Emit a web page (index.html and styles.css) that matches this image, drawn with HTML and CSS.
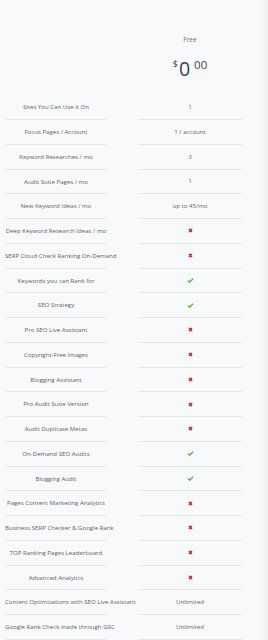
FILE: index.html
```html
<!DOCTYPE html>
<html lang="en">
<head>
<meta charset="utf-8">
<title>Pricing – Free</title>
<link rel="stylesheet" href="styles.css">
</head>
<body>
<div class="table">
  <div class="head-empty"></div>
  <div class="plan-head">
    <div class="plan-name">Free</div>
    <div class="price"><span class="cur">$</span>0<span class="cents">00</span></div>
  </div>

  <div class="cell label">Sites You Can Use It On</div><div class="cell val">1</div>
  <div class="cell label">Focus Pages / Account</div><div class="cell val">1 / account</div>
  <div class="cell label">Keyword Researches / mo</div><div class="cell val">3</div>
  <div class="cell label">Audit Suite Pages / mo</div><div class="cell val">1</div>
  <div class="cell label">New Keyword Ideas / mo</div><div class="cell val">up to 45/mo</div>
  <div class="cell label">Deep Keyword Research Ideas / mo</div><div class="cell val"><svg class="no" viewBox="0 0 10 10"><path d="M2 2L8 8M8 2L2 8"/></svg></div>
  <div class="cell label">SERP Cloud Check Ranking On-Demand</div><div class="cell val"><svg class="no" viewBox="0 0 10 10"><path d="M2 2L8 8M8 2L2 8"/></svg></div>
  <div class="cell label">Keywords you can Rank for</div><div class="cell val"><svg class="yes" viewBox="0 0 12 9"><path d="M1.5 4.5L4.5 7.5L10.5 1.5"/></svg></div>
  <div class="cell label">SEO Strategy</div><div class="cell val"><svg class="yes" viewBox="0 0 12 9"><path d="M1.5 4.5L4.5 7.5L10.5 1.5"/></svg></div>
  <div class="cell label">Pro SEO Live Assistant</div><div class="cell val"><svg class="no" viewBox="0 0 10 10"><path d="M2 2L8 8M8 2L2 8"/></svg></div>
  <div class="cell label">Copyright-Free Images</div><div class="cell val"><svg class="no" viewBox="0 0 10 10"><path d="M2 2L8 8M8 2L2 8"/></svg></div>
  <div class="cell label">Blogging Assistant</div><div class="cell val"><svg class="no" viewBox="0 0 10 10"><path d="M2 2L8 8M8 2L2 8"/></svg></div>
  <div class="cell label">Pro Audit Suite Version</div><div class="cell val"><svg class="no" viewBox="0 0 10 10"><path d="M2 2L8 8M8 2L2 8"/></svg></div>
  <div class="cell label">Audit Duplicate Metas</div><div class="cell val"><svg class="no" viewBox="0 0 10 10"><path d="M2 2L8 8M8 2L2 8"/></svg></div>
  <div class="cell label">On-Demand SEO Audits</div><div class="cell val"><svg class="yes" viewBox="0 0 12 9"><path d="M1.5 4.5L4.5 7.5L10.5 1.5"/></svg></div>
  <div class="cell label">Blogging Audit</div><div class="cell val"><svg class="yes" viewBox="0 0 12 9"><path d="M1.5 4.5L4.5 7.5L10.5 1.5"/></svg></div>
  <div class="cell label">Pages Content Marketing Analytics</div><div class="cell val"><svg class="no" viewBox="0 0 10 10"><path d="M2 2L8 8M8 2L2 8"/></svg></div>
  <div class="cell label">Business SERP Checker &amp; Google Rank</div><div class="cell val"><svg class="no" viewBox="0 0 10 10"><path d="M2 2L8 8M8 2L2 8"/></svg></div>
  <div class="cell label">TOP Ranking Pages Leaderboard</div><div class="cell val"><svg class="no" viewBox="0 0 10 10"><path d="M2 2L8 8M8 2L2 8"/></svg></div>
  <div class="cell label">Advanced Analytics</div><div class="cell val"><svg class="no" viewBox="0 0 10 10"><path d="M2 2L8 8M8 2L2 8"/></svg></div>
  <div class="cell label">Content Optimizations with SEO Live Assistant</div><div class="cell val">Unlimited</div>
  <div class="cell label">Google Rank Check made through GSC</div><div class="cell val">Unlimited</div>
</div>
</body>
</html>
```
FILE: styles.css
```css
html, body {
  margin: 0;
  padding: 0;
}
body {
  background: linear-gradient(to right, #f8f9fa 0, #f8f9fa 259px, #eef0f2 268px);
  font-family: "Open Sans", "Liberation Sans", sans-serif;
  color: #5f6366;
  min-height: 640px;
}
.table {
  display: grid;
  grid-template-columns: 102px 104px;
  column-gap: 31px;
  padding-left: 5px;
}
.plan-head {
  height: 95.25px;
  box-sizing: border-box;
  padding-top: 35px;
  text-align: center;
}
.plan-name {
  font-size: 6.6px;
  line-height: 10px;
  color: #727578;
}
.price {
  margin-top: 14.4px;
  font-size: 19.6px;
  line-height: 20px;
  color: #3b434c;
}
.cur {
  font-size: 9px;
  line-height: 9px;
  vertical-align: top;
  margin-right: 1px;
}
.cents {
  font-size: 11.5px;
  line-height: 11.5px;
  vertical-align: top;
  margin-left: 4px;
}
.cell {
  height: 24.75px;
  box-sizing: border-box;
  border-bottom: 1px solid #e4e7ea;
  font-size: 6.1px;
  white-space: nowrap;
}
.label {
  display: block;
  line-height: 24px;
  text-align: center;
}
.val {
  display: flex;
  align-items: center;
  justify-content: center;
  line-height: 8px;
}
.no {
  width: 5px;
  height: 5px;
  fill: none;
  stroke: #e0121b;
  stroke-width: 2.8;
}
.yes {
  width: 7px;
  height: 5px;
  fill: none;
  stroke: #3fbf3f;
  stroke-width: 2.4;
}
```
